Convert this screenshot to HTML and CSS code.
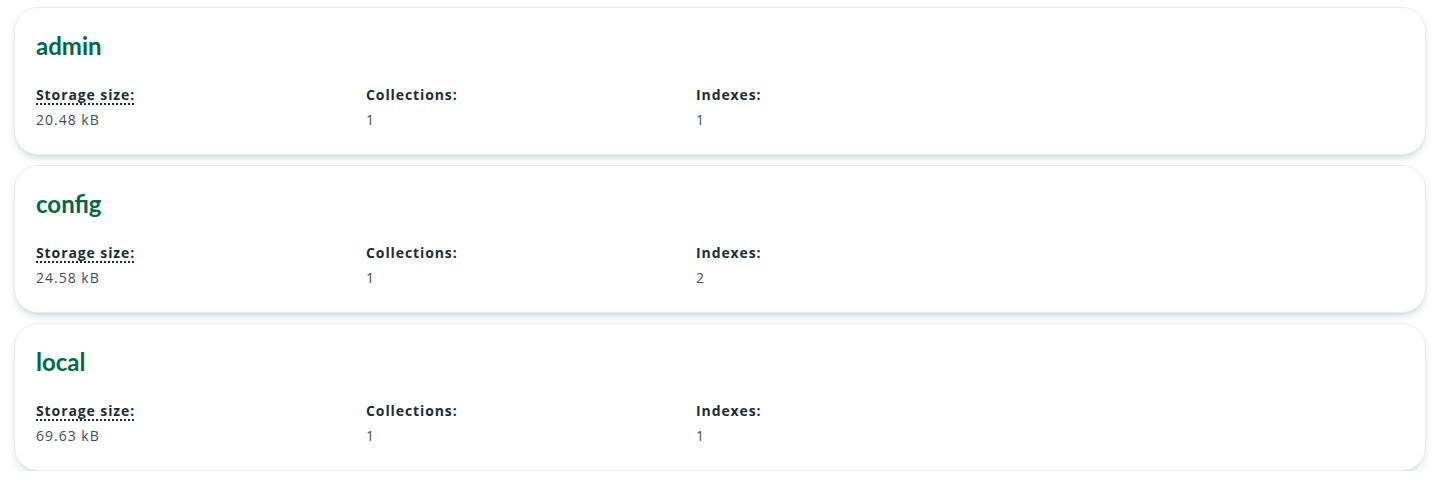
FILE: index.html
```html
<!DOCTYPE html>
<html>
<head>
<meta charset="utf-8">
<link rel="stylesheet" href="styles.css">
</head>
<body>
<div class="list">
  <div class="card">
    <h3 class="title">admin</h3>
    <div class="stats">
      <div class="stat"><div class="label dotted">Storage size:</div><div class="value">20.48 kB</div></div>
      <div class="stat"><div class="label">Collections:</div><div class="value">1</div></div>
      <div class="stat"><div class="label">Indexes:</div><div class="value">1</div></div>
    </div>
  </div>
  <div class="card">
    <h3 class="title">config</h3>
    <div class="stats">
      <div class="stat"><div class="label dotted">Storage size:</div><div class="value">24.58 kB</div></div>
      <div class="stat"><div class="label">Collections:</div><div class="value">1</div></div>
      <div class="stat"><div class="label">Indexes:</div><div class="value">2</div></div>
    </div>
  </div>
  <div class="card">
    <h3 class="title">local</h3>
    <div class="stats">
      <div class="stat"><div class="label dotted">Storage size:</div><div class="value">69.63 kB</div></div>
      <div class="stat"><div class="label">Collections:</div><div class="value">1</div></div>
      <div class="stat"><div class="label">Indexes:</div><div class="value">1</div></div>
    </div>
  </div>
</div>
</body>
</html>
```
FILE: styles.css
```css
html, body {
  margin: 0;
  padding: 0;
  background: #ffffff;
}
body {
  font-family: "Open Sans", "Noto Sans", sans-serif;
  color: #1c2d38;
}
.list {
  display: flex;
  flex-direction: column;
  gap: 10px;
  padding: 7px 9px 0 14px;
}
.card {
  border: 1px solid #e8edeb;
  border-radius: 24px;
  background: #fff;
  box-shadow: 0 4px 10px -4px rgba(0, 30, 43, 0.3);
  padding: 24px 20px 20px 21px;
  height: 148px;
  box-sizing: border-box;
}
.title {
  margin: 0;
  font-family: Lato, "Open Sans", sans-serif;
  font-size: 24px;
  line-height: 28px;
  font-weight: 700;
  color: #00684a;
}
.stats {
  display: grid;
  grid-template-columns: 330px 330px 330px;
  margin-top: 25px;
}
.stat {
  display: flex;
  flex-direction: column;
  align-items: flex-start;
  gap: 5px;
}
.label {
  font-size: 14px;
  font-weight: 700;
  line-height: 20px;
  letter-spacing: 0.9px;
  color: #1c2d38;
}
.dotted {
  text-decoration: underline dotted #1c2d38;
  text-decoration-thickness: 2px;
  text-underline-offset: 3px;
}
.value {
  font-size: 14px;
  line-height: 20px;
  letter-spacing: 1px;
  color: #3d4f58;
}
```
